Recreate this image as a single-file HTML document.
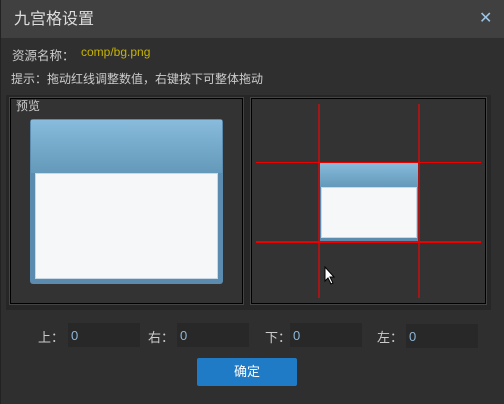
<!DOCTYPE html><html><head><meta charset="utf-8"><style>
*{margin:0;padding:0;box-sizing:border-box}
body{width:504px;height:404px;background:#2f2f2f;position:relative;overflow:hidden;font-family:"Liberation Sans","Noto Sans CJK SC",sans-serif;color:#ddd}
.a{position:absolute}
.t{font-size:12px;color:#ccc}
.inp{position:absolute;background:#282828;height:24px;width:72px;color:#8fb6d8;font-size:13px;padding:5px 3px}
</style></head><body>
<div class="a" style="left:0;top:0;width:504px;height:38px;background:#404040"></div>
<div class="a" style="left:14px;top:5px;font-size:16px;color:#ddd">九宫格设置</div>
<div class="a" style="left:479px;top:8px;font-size:16px;color:#9cc4e4">✕</div>
<div class="a" style="left:0;top:0;width:1px;height:404px;background:#222"></div>
<div class="a t" style="left:12px;top:45px;font-size:12.5px">资源名称：</div>
<div class="a" style="left:81px;top:45px;font-size:12px;color:#c8b400">comp/bg.png</div>
<div class="a t" style="left:11px;top:70px">提示：拖动红线调整数值，右键按下可整体拖动</div>
<div class="a" style="left:6px;top:95px;width:485px;height:215px;background:#262626"></div>
<div class="a" style="left:10px;top:98px;width:233px;height:206px;background:#333;border:1px solid #000;outline:1px solid #444"></div>
<div class="a t" style="left:16px;top:97px">预览</div>
<div class="a" style="left:30px;top:119px;width:193px;height:165px;background:#5b8cb0;border-radius:3px"></div>
<div class="a" style="left:31px;top:120px;width:191px;height:53px;background:linear-gradient(#88bbdc,#6499ba)"></div>
<div class="a" style="left:35px;top:173px;width:183px;height:106px;background:#f5f7f9;border:1px solid #c8d8e4"></div>
<div class="a" style="left:251px;top:98px;width:235px;height:206px;background:#333;border:1px solid #000;outline:1px solid #444"></div>
<div class="a" style="left:319px;top:163px;width:100px;height:78px;background:#5b8cb0"></div>
<div class="a" style="left:320px;top:163px;width:98px;height:24px;background:linear-gradient(#88bbdc,#6499ba)"></div>
<div class="a" style="left:321px;top:187px;width:96px;height:51px;background:#f5f7f9;border:1px solid #c8d8e4"></div>
<div class="a" style="left:318px;top:104px;width:2px;height:194px;background:#a01818"></div>
<div class="a" style="left:418px;top:104px;width:2px;height:194px;background:#a01818"></div>
<div class="a" style="left:256px;top:162px;width:225px;height:1px;background:#e00"></div>
<div class="a" style="left:256px;top:241px;width:225px;height:2px;background:#e00"></div>
<svg class="a" style="left:324px;top:266px" width="12" height="20"><path d="M1 1 L1 15 L4 12 L7 18 L9 17 L6 11 L10 11 Z" fill="#fff" stroke="#000"/></svg>
<div class="a t" style="left:38px;top:327px;font-size:13px">上：</div>
<div class="inp" style="left:68px;top:323px">0</div>
<div class="a t" style="left:148px;top:327px;font-size:13px">右：</div>
<div class="inp" style="left:177px;top:323px">0</div>
<div class="a t" style="left:265px;top:327px;font-size:13px">下：</div>
<div class="inp" style="left:290px;top:323px">0</div>
<div class="a t" style="left:377px;top:327px;font-size:13px">左：</div>
<div class="inp" style="left:406px;top:324px">0</div>
<div class="a" style="left:197px;top:358px;width:100px;height:28px;background:#1f7bc6;border-radius:2px;color:#fff;font-size:13px;text-align:center;line-height:28px">确定</div>
</body></html>
